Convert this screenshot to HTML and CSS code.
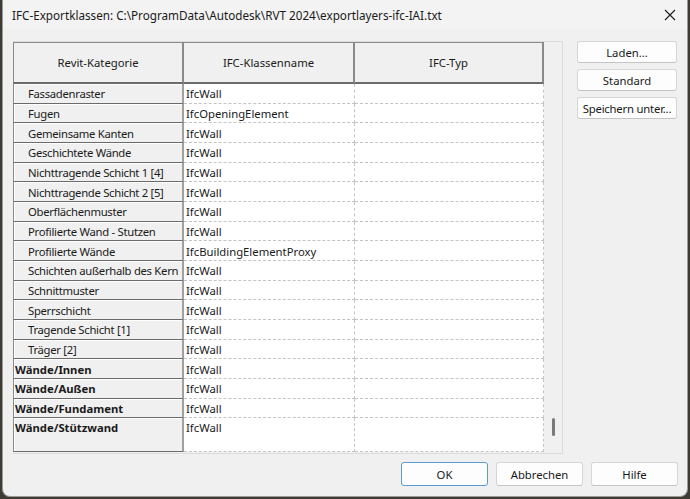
FILE: index.html
```html
<!DOCTYPE html>
<html lang="de">
<head>
  <meta charset="UTF-8">
  <title>IFC-Exportklassen</title>
  <link rel="stylesheet" href="styles.css">
</head>
<body>

  <div class="fenster">
    <div class="titelleiste">
      <span class="titel">IFC-Exportklassen: C:\ProgramData\Autodesk\RVT 2024\exportlayers-ifc-IAI.txt</span>
      <svg class="schliessen" width="12" height="12" viewBox="0 0 12 12">
        <path d="M1 1 L11 11 M11 1 L1 11" stroke="#1a1a1a" stroke-width="1.1" fill="none"/>
      </svg>
    </div>

    <div class="inhalt">
      <div class="raster">
        <div class="tabelle-box">
          <table>
            <colgroup>
              <col class="sp1"><col class="sp2"><col class="sp3">
            </colgroup>
            <thead>
              <tr>
                <th>Revit-Kategorie</th>
                <th>IFC-Klassenname</th>
                <th>IFC-Typ</th>
              </tr>
            </thead>
            <tbody>
              <tr><td class="unter">Fassadenraster</td><td>IfcWall</td><td></td></tr>
              <tr><td class="unter">Fugen</td><td>IfcOpeningElement</td><td></td></tr>
              <tr><td class="unter">Gemeinsame Kanten</td><td>IfcWall</td><td></td></tr>
              <tr><td class="unter">Geschichtete Wände</td><td>IfcWall</td><td></td></tr>
              <tr><td class="unter">Nichttragende Schicht 1 [4]</td><td>IfcWall</td><td></td></tr>
              <tr><td class="unter">Nichttragende Schicht 2 [5]</td><td>IfcWall</td><td></td></tr>
              <tr><td class="unter">Oberflächenmuster</td><td>IfcWall</td><td></td></tr>
              <tr><td class="unter">Profilierte Wand - Stutzen</td><td>IfcWall</td><td></td></tr>
              <tr><td class="unter">Profilierte Wände</td><td>IfcBuildingElementProxy</td><td></td></tr>
              <tr><td class="unter">Schichten außerhalb des Kern</td><td>IfcWall</td><td></td></tr>
              <tr><td class="unter">Schnittmuster</td><td>IfcWall</td><td></td></tr>
              <tr><td class="unter">Sperrschicht</td><td>IfcWall</td><td></td></tr>
              <tr><td class="unter">Tragende Schicht [1]</td><td>IfcWall</td><td></td></tr>
              <tr><td class="unter">Träger [2]</td><td>IfcWall</td><td></td></tr>
              <tr><td class="haupt">Wände/Innen</td><td>IfcWall</td><td></td></tr>
              <tr><td class="haupt">Wände/Außen</td><td>IfcWall</td><td></td></tr>
              <tr><td class="haupt">Wände/Fundament</td><td>IfcWall</td><td></td></tr>
              <tr class="letzte"><td class="haupt">Wände/Stützwand</td><td>IfcWall</td><td></td></tr>
            </tbody>
          </table>
        </div>
        <div class="scrollleiste">
          <div class="daumen"></div>
        </div>
      </div>

      <div class="seitenknoepfe">
        <button>Laden...</button>
        <button>Standard</button>
        <button class="schmal">Speichern unter...</button>
      </div>
    </div>

    <div class="fusszeile">
      <button class="standard">OK</button>
      <button>Abbrechen</button>
      <button>Hilfe</button>
    </div>
  </div>

</body>
</html>
```

FILE: styles.css
```css
html, body {
  margin: 0;
  height: 100%;
}
body {
  background-color: #3d3b33;
  font-family: "Noto Sans", "Segoe UI", sans-serif;
  font-size: 11.3px;
  color: #1a1a1a;
}
.fenster {
  box-sizing: border-box;
  width: 686px;
  height: 497px;
  margin-left: 2px;
  background-color: #f0f0f0;
  border: 1px solid #9a9a9a;
  border-top: none;
  border-radius: 0 0 8px 8px;
  display: flex;
  flex-direction: column;
}
.titelleiste {
  height: 29px;
  display: flex;
  align-items: center;
  justify-content: space-between;
  padding: 0 9px 0 9px;
  background-color: #f3f3f3;
}
.titel {
  font-size: 11.7px;
}
.schliessen {
  margin-right: 2px;
}
.inhalt {
  display: flex;
  gap: 14px;
  padding: 12px 10px 0 10px;
}
.raster {
  box-sizing: border-box;
  width: 550px;
  height: 413px;
  display: flex;
  border-top: 1px solid #dcdcdc;
  border-right: 1px solid #dcdcdc;
  border-bottom: 1px solid #dcdcdc;
}
.tabelle-box {
  width: 531px;
}
table {
  width: 531px;
  table-layout: fixed;
  border-collapse: separate;
  border-spacing: 0;
}
.sp1 { width: 171px; }
.sp2 { width: 171px; }
.sp3 { width: 189px; }
th {
  height: 42px;
  box-sizing: border-box;
  font-weight: normal;
  background-color: #f0f0f0;
  border-top: 1px solid #8a8a8a;
  border-right: 2px solid #8a8a8a;
  border-bottom: 2px solid #6b6b6b;
  padding: 0;
}
th:first-child {
  border-left: 1px solid #8a8a8a;
}
td {
  height: 19.67px;
  box-sizing: border-box;
  padding: 1px 0 0 2px;
  background-color: #ffffff;
  border-right: 1px dashed #c4c4c4;
  border-bottom: 1px dashed #c4c4c4;
  white-space: nowrap;
  overflow: hidden;
  line-height: 17px;
}
td.unter, td.haupt {
  background-color: #f0f0f0;
  border-left: 1px solid #8a8a8a;
  border-right: 2px solid #a0a0a0;
  border-bottom: 1px solid #6b6b6b;
  box-shadow: inset 1px 1px 0 #ffffff;
}
td.unter {
  padding-left: 14px;
  letter-spacing: -0.3px;
}
td.haupt {
  padding-left: 1px;
  font-weight: bold;
}
tr.letzte td {
  height: 34px;
  vertical-align: top;
}
.scrollleiste {
  flex: 1;
  position: relative;
}
.daumen {
  position: absolute;
  left: 8px;
  top: 376px;
  width: 3px;
  height: 18px;
  border-radius: 2px;
  background-color: #7a7a7a;
}
.seitenknoepfe {
  display: flex;
  flex-direction: column;
  gap: 6px;
}
button {
  font-family: "Noto Sans", "Segoe UI", sans-serif;
  font-size: 11.3px;
  color: #1a1a1a;
  background-color: #fdfdfd;
  border: 1px solid #d6d6d6;
  border-bottom-color: #c4c4c4;
  border-radius: 3px;
  padding: 0;
}
.seitenknoepfe button {
  width: 100px;
  height: 22px;
}
.seitenknoepfe button.schmal {
  letter-spacing: -0.2px;
}
.fusszeile {
  display: flex;
  justify-content: flex-end;
  gap: 8px;
  padding: 8px 9px 0 0;
}
.fusszeile button {
  width: 87px;
  height: 24px;
}
.fusszeile button.standard {
  border: 1px solid #5b9bd5;
}
```
